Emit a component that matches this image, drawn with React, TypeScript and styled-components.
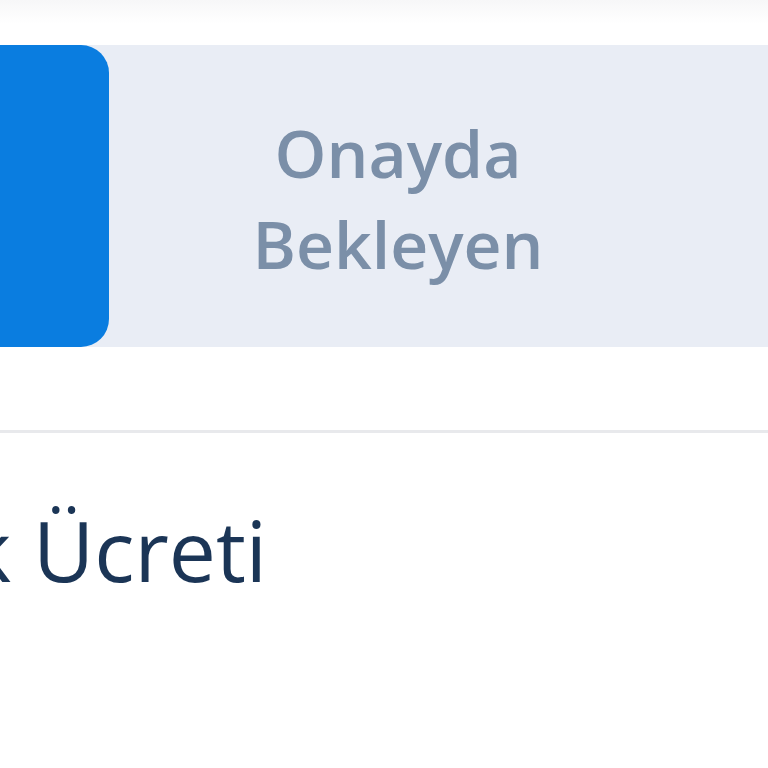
import React from 'react';
import styled, { createGlobalStyle } from 'styled-components';

const GlobalStyle = createGlobalStyle`
  html, body {
    margin: 0;
    padding: 0;
    background: #ffffff;
    font-family: "Open Sans", "Noto Sans", sans-serif;
  }
`;

const Screen = styled.div`
  width: 768px;
  height: 768px;
  overflow: hidden;
  background: linear-gradient(#f7f7f8 0, #ffffff 24px);
  padding-top: 45px;
  box-sizing: border-box;
`;

const SegmentBar = styled.div`
  display: flex;
  height: 302px;
  background: #e9edf5;
  margin-left: -469px;
  width: 1400px;
`;

const Segment = styled.div<{ active?: boolean }>`
  flex: 0 0 578px;
  display: flex;
  align-items: center;
  justify-content: center;
  text-align: center;
  border-radius: 28px;
  background: ${({ active }) => (active ? '#0a7de0' : 'transparent')};
  color: ${({ active }) => (active ? '#ffffff' : '#7b8fa8')};
  font-size: 66px;
  font-weight: 600;
  line-height: 91px;
  padding-top: 4px;
  box-sizing: border-box;
`;

const Divider = styled.hr`
  margin: 83px 0 0;
  border: none;
  height: 3px;
  background: #e8e9ec;
`;

const Row = styled.div`
  display: flex;
  align-items: flex-start;
  padding-top: 75px;
`;

const Label = styled.span`
  margin-left: -33px;
  font-size: 84px;
  font-weight: 500;
  color: #1b3556;
  white-space: nowrap;
  line-height: 1;
`;

const App = () => (
  <>
    <GlobalStyle />
    <Screen>
      <SegmentBar>
        <Segment active>Onaylanan</Segment>
        <Segment>
          Onayda
          <br />
          Bekleyen
        </Segment>
        <Segment>Reddedilen</Segment>
      </SegmentBar>
      <Divider />
      <Row>
        <Label>k Ücreti</Label>
      </Row>
    </Screen>
  </>
);

export default App;
